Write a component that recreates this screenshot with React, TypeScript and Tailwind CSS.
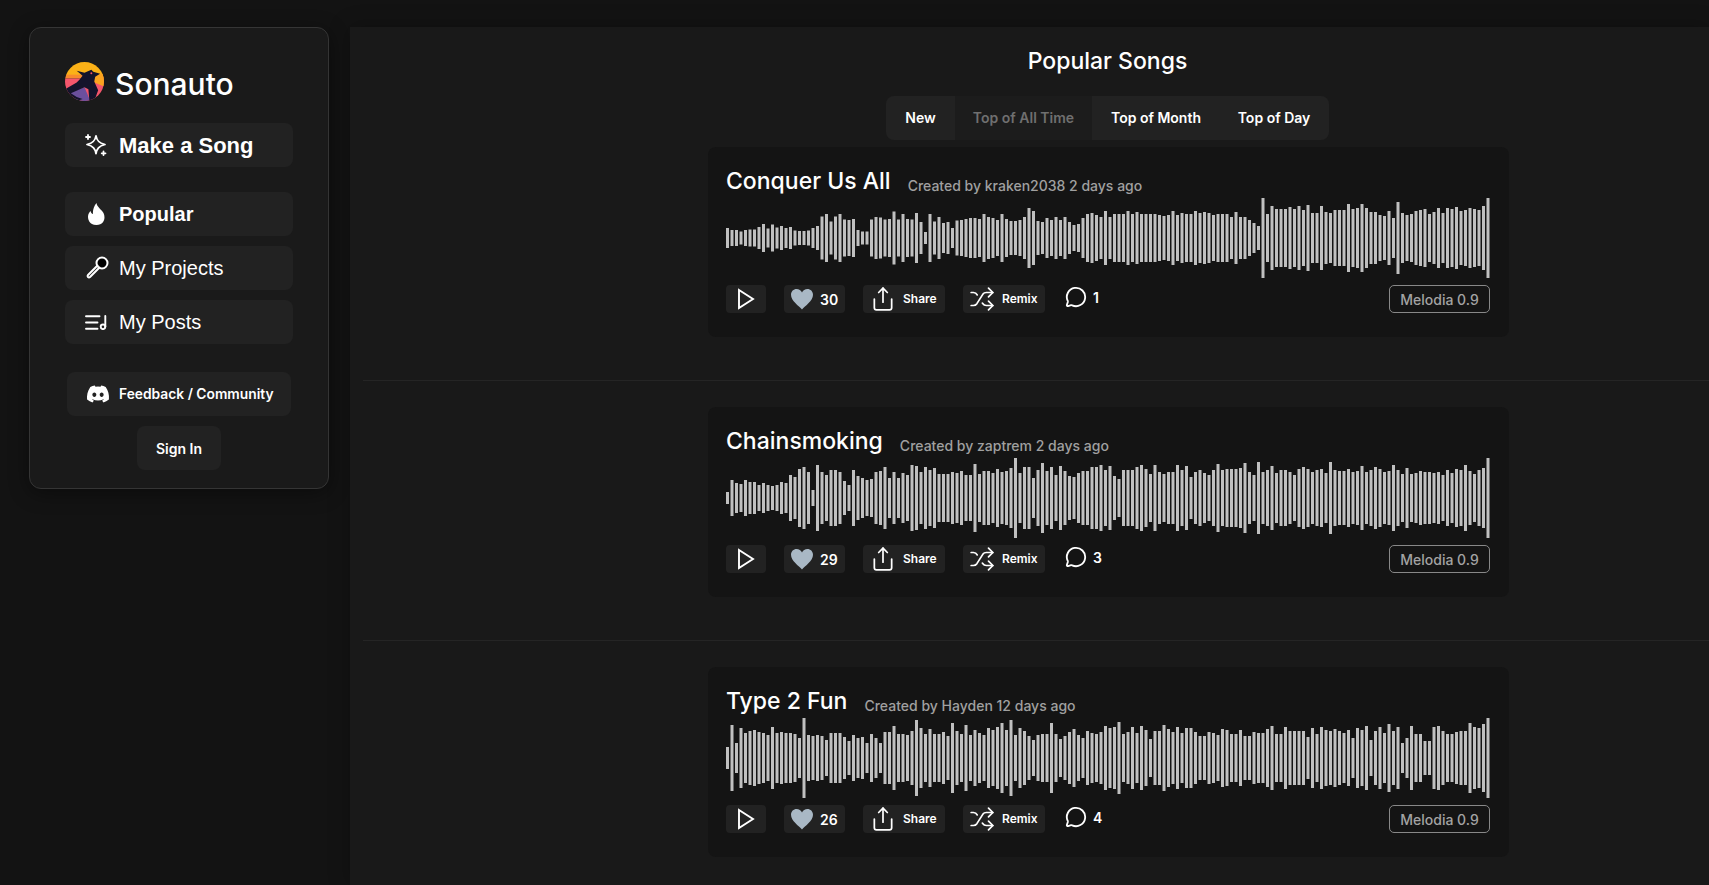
import { Share, Shuffle, MessageCircle } from "lucide-react";
import { FaDiscord } from "react-icons/fa";

const wave1 = [20,16,16,13,16,17,17,22,28,19,27,21,24,20,22,15,14,14,15,20,24,43,48,33,43,48,37,36,38,16,13,13,37,42,41,37,38,53,37,48,38,37,50,32,12,48,33,42,30,32,20,35,36,38,40,40,38,48,42,40,36,48,38,34,34,36,42,60,54,34,32,40,36,42,36,42,32,26,28,40,48,50,46,42,54,42,48,48,48,54,48,52,48,48,48,48,46,44,46,54,46,50,48,48,54,50,52,50,46,48,48,48,42,52,42,42,36,30,24,80,48,64,58,58,58,62,58,64,56,66,50,50,64,52,50,56,56,56,68,58,60,68,60,52,52,46,44,54,40,72,50,46,48,54,56,58,48,52,60,50,60,58,62,54,56,60,58,56,64,80];
const wave2 = [12,36,30,28,36,32,32,26,30,26,24,26,32,30,46,42,58,62,52,16,66,52,46,56,56,52,34,26,56,44,40,36,38,52,54,62,40,52,40,50,46,66,64,52,62,56,60,48,48,48,52,50,54,46,46,68,48,54,54,50,58,52,54,60,80,50,62,62,40,56,70,54,62,46,64,54,44,42,50,54,54,62,62,66,56,64,44,38,56,56,56,62,66,58,48,66,52,48,52,52,66,56,64,42,52,56,50,46,56,68,56,58,58,58,60,70,52,46,72,52,56,64,50,56,56,52,46,58,62,58,52,56,58,50,72,56,54,54,58,52,54,64,52,56,62,58,52,54,66,56,48,60,48,50,54,52,52,50,52,46,56,50,58,56,66,54,48,56,60,80];
const wave3 = [22,66,30,60,50,54,56,52,50,46,62,50,52,50,50,48,40,80,46,44,46,44,36,50,50,50,42,34,46,40,42,30,48,40,30,52,52,64,48,48,46,54,76,60,48,58,48,48,52,44,70,54,48,66,46,56,50,46,60,56,62,70,56,76,46,60,54,44,36,46,48,48,70,48,38,44,52,58,46,40,54,50,48,52,64,60,62,72,48,52,62,50,64,56,38,54,54,66,58,52,62,50,60,60,52,44,44,52,50,46,58,56,48,48,56,44,44,52,50,50,58,64,48,48,62,54,54,54,54,42,60,48,62,56,54,58,54,50,56,40,60,56,64,36,54,62,50,68,54,62,30,40,64,48,48,34,34,62,64,54,48,48,52,54,54,70,62,60,68,80];

const songs = [
  { title: "Conquer Us All", author: "kraken2038", age: "2 days ago", likes: 30, comments: 1, wave: wave1 },
  { title: "Chainsmoking", author: "zaptrem", age: "2 days ago", likes: 29, comments: 3, wave: wave2 },
  { title: "Type 2 Fun", author: "Hayden", age: "12 days ago", likes: 26, comments: 4, wave: wave3 },
];

function Logo() {
  return (
    <svg viewBox="0 0 40 40" className="h-[39px] w-[39px] shrink-0">
      <defs>
        <clipPath id="logo-clip">
          <circle cx="20" cy="20" r="20" />
        </clipPath>
      </defs>
      <g clipPath="url(#logo-clip)">
        <rect width="40" height="14" fill="#fbb117" />
        <rect y="13" width="40" height="4" fill="#f98a2c" />
        <rect y="17" width="40" height="23" fill="#f5566c" />
        <path d="M29 12 L40 12 L40 25 L30 21 Z" fill="#fba31f" />
        <path d="M5 31 L20 26 L26 40 L12 40 Z" fill="#6b4f9e" />
        <path d="M12 9 L20 11 L27 8 L29 10 L36 12 L31 15 L30 20 L34 29 L30 40 L25 40 L24 28 L20 26 L6 32 L12 36 L18 38 L12 40 L0 34 L0 28 L12 21 L15 18 L18 14 Z" fill="#14132b" />
        <circle cx="27" cy="11.5" r="1" fill="#f5566c" />
      </g>
    </svg>
  );
}

function SparkleIcon() {
  return (
    <svg viewBox="0 0 22 22" fill="none" stroke="#fff" strokeWidth="1.8" strokeLinejoin="round" strokeLinecap="round" className="h-[22px] w-[22px]">
      <path d="M11 2 C11.8 6.5 13.8 8.8 20 10.5 C13.8 12.2 11.8 14.5 11 19.5 C10.2 14.5 8.2 12.2 2 10.5 C8.2 8.8 10.2 6.5 11 2 Z" />
      <path d="M3 1 V5 M1 3 H5 M18.5 17.5 V21 M16.7 19.3 H20.5" />
    </svg>
  );
}

function FlameIcon() {
  return (
    <svg viewBox="0 0 17 22" fill="#fff" className="ml-[3px] h-[22px] w-[17px]">
      <path d="M8.5 0 C9 4 13 6 15.5 10 C17.5 14 17 22 8.5 22 C1 22 0 16 0 13.5 C0 11 1.5 9 2.5 8 C3 10 4 11 5 11 C4.5 7 6 3 8.5 0 Z" />
    </svg>
  );
}

function MicIcon() {
  return (
    <svg viewBox="0 0 24 24" fill="none" stroke="#fff" strokeWidth="2" strokeLinecap="round" strokeLinejoin="round" className="h-6 w-6">
      <circle cx="17" cy="7" r="5.5" fill="#000" />
      <path d="M12.5 9.5 L3 19 a1.5 1.5 0 0 0 0 2 a1.5 1.5 0 0 0 2 0 L14.5 11.5" />
    </svg>
  );
}

function PlaylistIcon() {
  return (
    <svg viewBox="0 0 22 15" fill="none" stroke="#fff" strokeWidth="1.9" strokeLinecap="round" className="h-[15px] w-[22px]">
      <path d="M1 1.2 H14.5 M1 7.5 H12.5 M1 13.8 H12.5" />
      <circle cx="18" cy="11.8" r="2.3" />
      <path d="M20.3 11.8 V1" />
    </svg>
  );
}

function PlayIcon() {
  return (
    <svg viewBox="0 0 18 22" fill="none" stroke="#fff" strokeWidth="1.9" strokeLinejoin="miter" className="h-[22px] w-[18px]">
      <path d="M2 2 L16 11 L2 20 Z" />
    </svg>
  );
}

function HeartIcon() {
  return (
    <svg viewBox="0 0 24 24" fill="#a9b8c5" className="h-6 w-6">
      <path d="M12 22.5 C9 19 1 14 1 7.8 C1 4.4 3.6 2 6.6 2 C9 2 11 3.3 12 5.4 C13 3.3 15 2 17.4 2 C20.4 2 23 4.4 23 7.8 C23 14 15 19 12 22.5 Z" />
    </svg>
  );
}

function Waveform({ bars }: { bars: number[] }) {
  return (
    <svg width="764" height="80" viewBox="0 0 764 80" className="block">
      {bars.map((h, i) => (
        <rect key={i} x={i === bars.length - 1 ? 760.5 : i * 4.5} y={40 - h / 2} width="3" height={h} fill="#c0c0c0" />
      ))}
    </svg>
  );
}

function NavButton({ icon, label, bold, large }: { icon: React.ReactNode; label: string; bold?: boolean; large?: boolean }) {
  return (
    <div className={`flex h-11 items-center rounded-lg bg-[#222222] pl-5 text-white [font-family:'Liberation_Sans',Arial,sans-serif] ${large ? "text-[22px]" : "text-[20px]"}`}>
      <span className="flex w-[34px] justify-start">{icon}</span>
      <span className={bold ? "font-bold" : ""}>{label}</span>
    </div>
  );
}

function SongCard({ song }: { song: (typeof songs)[number] }) {
  return (
    <div className="h-[190px] rounded-lg bg-[#141414] px-[18px] pt-5">
      <div className="flex h-[31px] items-baseline text-white">
        <span className="text-[23px] font-medium leading-[29px]">{song.title}</span>
        <span className="ml-[17px] translate-y-[2px] text-[14px] font-medium text-[#a0a0a0]">
          Created by {song.author} {song.age}
        </span>
      </div>
      <Waveform bars={song.wave} />
      <div className="mt-[7px] flex h-7 items-center text-white">
        <div className="flex h-7 w-10 items-center justify-center rounded bg-[#222222]">
          <PlayIcon />
        </div>
        <div className="ml-[18px] flex h-7 w-[61px] items-center rounded bg-[#222222] pl-[6px]">
          <HeartIcon />
          <span className="ml-[6px] text-[14px] font-semibold">{song.likes}</span>
        </div>
        <div className="ml-[18px] flex h-7 w-[82px] items-center rounded bg-[#222222] pl-[7px]">
          <Share size={26} strokeWidth={1.6} />
          <span className="ml-[7px] text-[12px] font-semibold">Share</span>
        </div>
        <div className="ml-[18px] flex h-7 w-[82px] items-center rounded bg-[#222222] pl-[6px]">
          <Shuffle size={26} strokeWidth={1.6} />
          <span className="ml-[7px] text-[12px] font-semibold">Remix</span>
        </div>
        <div className="ml-5 flex -translate-y-[2px] items-center">
          <MessageCircle size={22} strokeWidth={2} />
          <span className="ml-[6px] text-[14px] font-semibold">{song.comments}</span>
        </div>
        <div className="ml-auto mr-[1px] flex h-7 w-[101px] items-center justify-center rounded-[5px] border border-[#888888] text-[14px] font-medium text-[#a3a3a3]">
          Melodia 0.9
        </div>
      </div>
    </div>
  );
}

export default function App() {
  return (
    <div className="flex h-screen overflow-hidden bg-[#131313] text-white [font-family:Inter,sans-serif]">
      {/* Sidebar */}
      <aside className="ml-[29px] mt-[27px] h-[462px] w-[300px] shrink-0 rounded-xl border border-[#353535] bg-[#1a1a1a] px-[35px] pt-[34px] shadow-[0_4px_20px_rgba(0,0,0,0.4)]">
        <div className="flex h-[39px] items-center">
          <Logo />
          <span className="ml-[11px] mt-[6px] text-[30px] font-medium">Sonauto</span>
        </div>
        <div className="mt-[22px] flex flex-col">
          <NavButton icon={<SparkleIcon />} label="Make a Song" bold large />
          <div className="mt-[25px] flex flex-col gap-[10px]">
            <NavButton icon={<FlameIcon />} label="Popular" bold />
            <NavButton icon={<MicIcon />} label="My Projects" />
            <NavButton icon={<PlaylistIcon />} label="My Posts" />
          </div>
          <div className="mx-[2px] mt-7 flex h-11 items-center rounded-lg bg-[#222222] pl-[19px] text-[13.8px] font-semibold">
            <FaDiscord size={24} />
            <span className="ml-[9px]">Feedback / Community</span>
          </div>
          <div className="mx-auto mt-[10px] flex h-11 w-[84px] items-center justify-center rounded-lg bg-[#222222] text-[14px] font-semibold">
            Sign In
          </div>
        </div>
      </aside>

      {/* Main */}
      <main className="ml-[21px] mt-[27px] flex-1 bg-[#191919] pt-[18px] shadow-[0_0_20px_rgba(0,0,0,0.25)]">
        <div className="ml-[358px] flex w-[801px] flex-col">
          <h1 className="pr-[2px] text-center text-[23px] font-medium leading-8">Popular Songs</h1>
          <div className="ml-[178px] mt-[19px] flex h-11 w-[443px] overflow-hidden rounded-lg text-[14px] font-semibold">
            <div className="flex w-[69px] items-center justify-center bg-[#222222] pb-[2px]">New</div>
            <div className="flex w-[137px] items-center justify-center bg-[#1c1c1c] pb-[2px] text-[#6f6f6f]">Top of All Time</div>
            <div className="flex w-[123px] items-center justify-center bg-[#222222] pb-[2px] pl-[5px]">Top of Month</div>
            <div className="flex w-[114px] items-center justify-center bg-[#222222] pb-[2px] pl-1">Top of Day</div>
          </div>
        </div>
        <div className="mt-[7px] flex flex-col">
          {songs.map((song, i) => (
            <div key={song.title}>
              <div className="ml-[358px] w-[801px]">
                <SongCard song={song} />
              </div>
              {i < songs.length - 1 && <div className="mb-[26px] ml-[13px] mt-[43px] h-px bg-[#252525]" />}
            </div>
          ))}
        </div>
      </main>
    </div>
  );
}
